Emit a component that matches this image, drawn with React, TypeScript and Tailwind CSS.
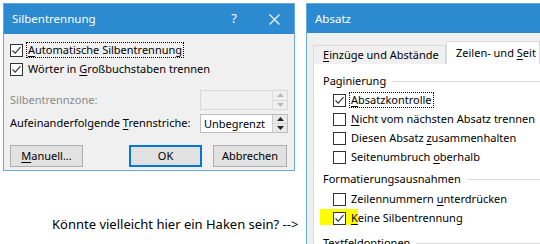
import React from "react";

const FONT = { fontFamily: '"Noto Sans", "Segoe UI", Arial, sans-serif' };

function U({ children }: { children: React.ReactNode }) {
  return <span className="underline underline-offset-2 decoration-1">{children}</span>;
}

function Check({ checked }: { checked?: boolean }) {
  return (
    <span className="w-[13px] h-[13px] border border-[#333] bg-white flex items-center justify-center shrink-0">
      {checked && (
        <svg width="11" height="11" viewBox="0 0 11 11">
          <path d="M1.5 5.5 L4.2 8.2 L9.5 2.2" fill="none" stroke="#333" strokeWidth="1.1" />
        </svg>
      )}
    </span>
  );
}

function Spinner({ disabled }: { disabled?: boolean }) {
  const c = disabled ? "#b8b8b8" : "#222";
  return (
    <div className={`w-[15px] h-full flex flex-col border-l ${disabled ? "border-[#e0e0e0] bg-[#f0f0f0]" : "border-[#ccc] bg-[#e8e8e8]"}`}>
      <div className="flex-1 flex items-center justify-center border-b border-[#d8d8d8]">
        <svg width="7" height="4" viewBox="0 0 7 4"><path d="M0 4 L3.5 0 L7 4Z" fill={c} /></svg>
      </div>
      <div className="flex-1 flex items-center justify-center">
        <svg width="7" height="4" viewBox="0 0 7 4"><path d="M0 0 L3.5 4 L7 0Z" fill={c} /></svg>
      </div>
    </div>
  );
}

export default function App() {
  return (
    <div className="w-[540px] h-[244px] bg-white overflow-hidden flex text-[11px] text-black whitespace-nowrap" style={FONT}>
      {/* left column */}
      <div className="flex flex-col pl-[3px] pt-[3px] w-[295px] shrink-0">
        <div className="w-[292px] h-[168px] border border-[#6aa8dc] bg-[#f0f0f0] flex flex-col">
          <div className="h-[30px] bg-[#2b8ad0] flex items-center text-white text-[11.5px] pl-[8px]">
            <span className="flex-1">Silbentrennung</span>
            <span className="w-[40px] text-center text-[13px]">?</span>
            <span className="w-[40px] flex justify-center">
              <svg width="11" height="11" viewBox="0 0 11 11"><path d="M0.5 0.5 L10.5 10.5 M10.5 0.5 L0.5 10.5" stroke="white" strokeWidth="1.1" /></svg>
            </span>
          </div>
          <div className="flex flex-col px-[6px] pt-[7px]">
            <div className="flex items-center h-[18px]">
              <Check checked />
              <span className="ml-[3px] border border-dotted border-black px-[1px] leading-[14px]">
                <U>A</U>utomatische Silbentrennung
              </span>
            </div>
            <div className="flex items-center h-[18px] mt-[1px]">
              <Check checked />
              <span className="ml-[5px]">Wörter in <U>G</U>roßbuchstaben trennen</span>
            </div>
            <div className="flex items-center h-[20px] mt-[12px]">
              <span className="flex-1 text-[#8a8a8a]">Silbentrennzone:</span>
              <div className="w-[88px] h-[20px] border border-[#d9d9d9] bg-[#f0f0f0] flex">
                <div className="flex-1" />
                <Spinner disabled />
              </div>
            </div>
            <div className="flex items-center h-[19px] mt-[4px]">
              <span className="flex-1">Aufeinanderfolgende <U>T</U>rennstriche:</span>
              <div className="w-[88px] h-[19px] border border-[#bdbdbd] bg-white flex">
                <div className="flex-1 pl-[3px] leading-[17px]">Unbegrenzt</div>
                <Spinner />
              </div>
            </div>
            <div className="flex items-center mt-[12px] h-[22px]">
              <button className="w-[73px] h-[22px] border border-[#adadad] bg-[#e1e1e1]"><U>M</U>anuell...</button>
              <button className="w-[73px] h-[22px] border-2 border-[#0078d7] bg-[#e1e1e1] ml-[46px]">OK</button>
              <button className="w-[74px] h-[22px] border border-[#adadad] bg-[#e1e1e1] ml-[11px]">Abbrechen</button>
            </div>
          </div>
        </div>
        <div className="mt-[44px] pl-[49px] text-[13px]">Könnte vielleicht hier ein Haken sein? --&gt;</div>
      </div>
      {/* right dialog */}
      <div className="ml-[11px] mt-[3px] flex-1 border-l border-t border-[#6aa8dc] bg-[#f0f0f0] flex flex-col">
        <div className="h-[29px] bg-[#2b8ad0] text-white text-[11.5px] flex items-center pl-[8px] shrink-0">Absatz</div>
        <div className="pl-[6px] pt-[8px] flex flex-col">
          <div className="flex items-end h-[23px]">
            <div className="w-[133px] h-[19px] border border-b-0 border-[#d9d9d9] bg-[#f0f0f0] pl-[9px] flex items-center">
              <U>E</U>inzüge und Abstände
            </div>
            <div className="flex-1 h-[23px] border border-b-0 border-[#d9d9d9] bg-white pl-[9px] pt-[3px]">
              Zeilen- und <U>S</U>eit
            </div>
          </div>
          <div className="bg-white border-l border-[#d9d9d9] h-[200px] pl-[9px] pt-[9px] flex flex-col">
            <div className="flex items-center h-[16px]">
              <span>Paginierung</span>
              <span className="flex-1 h-px bg-[#dcdcdc] ml-[6px]" />
            </div>
            <div className="pl-[10px] flex flex-col mt-[2px]">
              <div className="flex items-center h-[18px]">
                <Check checked />
                <span className="ml-[3px] border border-dotted border-black px-[1px] leading-[14px]"><U>A</U>bsatzkontrolle</span>
              </div>
              <div className="flex items-center h-[18px] mt-[1px]">
                <Check />
                <span className="ml-[5px]"><U>N</U>icht vom nächsten Absatz trennen</span>
              </div>
              <div className="flex items-center h-[18px] mt-[1px]">
                <Check />
                <span className="ml-[5px]">Diesen Absatz <U>z</U>usammenhalten</span>
              </div>
              <div className="flex items-center h-[18px] mt-[1px]">
                <Check />
                <span className="ml-[5px]">Seitenumbruch <U>o</U>berhalb</span>
              </div>
            </div>
            <div className="flex items-center h-[16px] mt-[5px]">
              <span>Formatierungsausnahmen</span>
              <span className="flex-1 h-px bg-[#dcdcdc] ml-[6px]" />
            </div>
            <div className="pl-[10px] flex flex-col mt-[3px]">
              <div className="flex items-center h-[18px]">
                <Check />
                <span className="ml-[5px]">Zeilennummern <U>u</U>nterdrücken</span>
              </div>
              <div className="flex items-center h-[18px] mt-[1px] relative">
                <span className="absolute left-[-13px] top-[0px] w-[38px] h-[16px] bg-[#ffff00]" />
                <span className="relative"><Check checked /></span>
                <span className="ml-[5px] relative"><U>K</U>eine Silbentrennung</span>
              </div>
            </div>
            <div className="flex items-center h-[16px] mt-[8px]">
              <span>Textfeldoptionen</span>
              <span className="flex-1 h-px bg-[#dcdcdc] ml-[6px]" />
            </div>
          </div>
        </div>
      </div>
    </div>
  );
}
